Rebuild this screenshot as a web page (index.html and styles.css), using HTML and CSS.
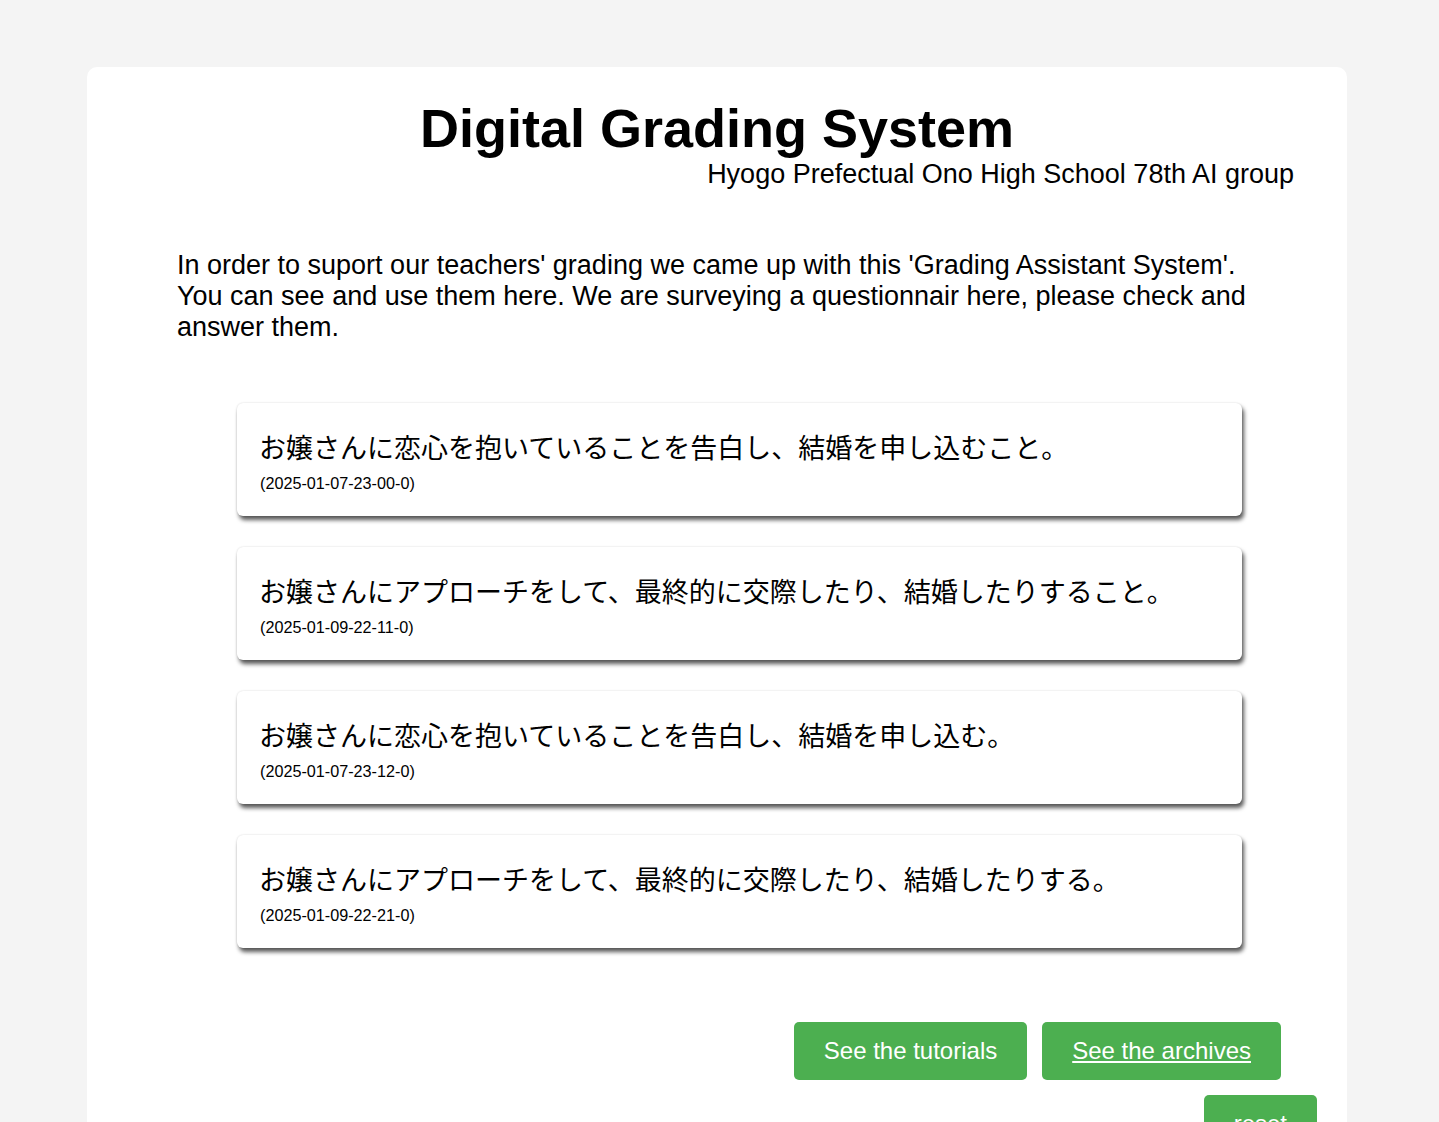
FILE: index.html
```html
<!DOCTYPE html>
<html lang="ja">
<head>
<meta charset="utf-8">
<title>Digital Grading System</title>
<link rel="stylesheet" href="styles.css">
</head>
<body>
<main class="container">
  <header class="header">
    <h1 class="title">Digital Grading System</h1>
    <p class="subtitle">Hyogo Prefectual Ono High School 78th AI group</p>
  </header>
  <p class="intro">In order to suport our teachers' grading we came up with this 'Grading Assistant System'. You can see and use them here. We are surveying a questionnair here, please check and answer them.</p>
  <section class="cards">
    <div class="card">
      <p class="card-text">お嬢さんに恋心を抱いていることを告白し、結婚を申し込むこと。</p>
      <p class="card-date">(2025-01-07-23-00-0)</p>
    </div>
    <div class="card">
      <p class="card-text">お嬢さんにアプローチをして、最終的に交際したり、結婚したりすること。</p>
      <p class="card-date">(2025-01-09-22-11-0)</p>
    </div>
    <div class="card">
      <p class="card-text">お嬢さんに恋心を抱いていることを告白し、結婚を申し込む。</p>
      <p class="card-date">(2025-01-07-23-12-0)</p>
    </div>
    <div class="card">
      <p class="card-text">お嬢さんにアプローチをして、最終的に交際したり、結婚したりする。</p>
      <p class="card-date">(2025-01-09-22-21-0)</p>
    </div>
  </section>
  <div class="actions">
    <button class="btn" type="button">See the tutorials</button>
    <a class="btn btn-link" href="#">See the archives</a>
  </div>
  <div class="reset-row">
    <button class="btn" type="button">reset</button>
  </div>
</main>
</body>
</html>
```

FILE: styles.css
```css
html, body {
  margin: 0;
  padding: 0;
}

body {
  background: #f4f4f4;
  font-family: "Liberation Sans", Arial, "Noto Sans CJK JP", sans-serif;
  color: #000;
}

.container {
  width: 1260px;
  margin: 67px 0 0 87px;
  background: #fff;
  border-radius: 10px;
  padding: 31px 0 40px;
  box-sizing: border-box;
}

.header {
  display: flex;
  flex-direction: column;
}

.title {
  margin: 0;
  font-size: 54px;
  line-height: 60px;
  font-weight: bold;
  text-align: center;
}

.subtitle {
  margin: 1px 0 0;
  padding-right: 53px;
  font-size: 27px;
  line-height: 31px;
  text-align: right;
}

.intro {
  margin: 60px 0 0 90px;
  width: 1080px;
  font-size: 27px;
  line-height: 31px;
}

.cards {
  margin: 60px 0 0 150px;
  width: 1005px;
  display: flex;
  flex-direction: column;
  gap: 31px;
}

.card {
  background: #fff;
  border-radius: 6px;
  padding: 26px 24px 24px;
  box-shadow: 2px 4px 4px rgba(0, 0, 0, 0.65), 0 0 2px rgba(0, 0, 0, 0.15);
}

.card-text {
  margin: 0 0 0 -2px;
  font-family: "Noto Sans CJK JP", sans-serif;
  font-size: 27px;
  line-height: 36px;
}

.card-date {
  margin: 9px 0 0 -1px;
  font-size: 16.2px;
  line-height: 18px;
}

.actions {
  margin-top: 74px;
  display: flex;
  justify-content: flex-end;
  gap: 15px;
  padding-right: 66px;
}

.reset-row {
  margin-top: 15px;
  display: flex;
  justify-content: flex-end;
  padding-right: 30px;
}

.btn {
  display: inline-block;
  background: #4caf50;
  color: #fff;
  border: none;
  border-radius: 5px;
  padding: 15px 30px;
  font-family: "Liberation Sans", Arial, sans-serif;
  font-size: 24px;
  line-height: 28px;
  cursor: pointer;
}

.btn-link {
  text-decoration: underline;
}
```
